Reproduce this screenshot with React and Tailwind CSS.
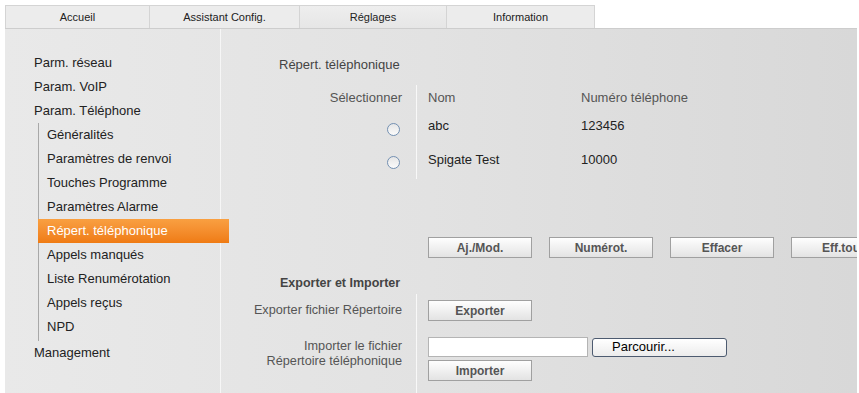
import React from "react";

const tabs = [
  { label: "Accueil", w: "w-[145px]" },
  { label: "Assistant Config.", w: "w-[150px]" },
  { label: "Réglages", w: "w-[147px]", active: true },
  { label: "Information", w: "w-[148px]" },
];

const subItems = [
  "Généralités",
  "Paramètres de renvoi",
  "Touches Programme",
  "Paramètres Alarme",
  "Répert. téléphonique",
  "Appels manqués",
  "Liste Renumérotation",
  "Appels reçus",
  "NPD",
];

function Btn({ children }) {
  return (
    <div className="w-[104px] h-[21px] shrink-0 flex items-center justify-center border border-[#a0a0a0] bg-gradient-to-b from-[#fefefe] to-[#e3e3e3] text-[12px] font-bold text-[#555]">
      {children}
    </div>
  );
}

function Radio() {
  return (
    <div className="w-[13px] h-[13px] rounded-full border border-[#7390b2] bg-gradient-to-b from-[#e6e6e6] to-[#fbfbfb]" />
  );
}

export default function App() {
  return (
    <div className="w-[859px] h-[393px] bg-white overflow-hidden font-['Liberation_Sans',Arial,sans-serif] text-[13px] text-[#222]">
      <div className="pl-[5px] pt-[5px] pr-[2px] h-full flex flex-col">
        <div className="flex h-[23px] shrink-0">
          {tabs.map((t) => (
            <div
              key={t.label}
              className={`${t.w} h-full flex items-center justify-center text-[11px] text-[#222] border-t border-r border-[#d4d4d4] first:border-l ${
                t.active ? "bg-gradient-to-b from-[#eeeeee] to-[#e6e6e6]" : "bg-[#ececec]"
              }`}
            >
              {t.label}
            </div>
          ))}
        </div>
        <div className="flex flex-1 min-h-0 bg-gradient-to-r from-[#e9e9e9] via-[#e2e2e2] to-[#d8d8d8] border-t border-[#cdcdcd]">
          {/* Sidebar */}
          <div className="w-[216px] shrink-0 border-r border-[#f6f6f6] pt-[22px] relative z-10">
            {["Parm. réseau", "Param. VoIP", "Param. Téléphone"].map((s) => (
              <div key={s} className="h-[24px] flex items-center pl-[29px]">
                {s}
              </div>
            ))}
            <div className="ml-[33px] border-l border-[#a8a8a8] pb-[2px]">
              {subItems.map((s) =>
                s === "Répert. téléphonique" ? (
                  <div
                    key={s}
                    className="-ml-px w-[191px] h-[24px] flex items-center pl-[9px] text-white bg-gradient-to-b from-[#f9a041] to-[#ef7b12]"
                  >
                    {s}
                  </div>
                ) : (
                  <div key={s} className="h-[24px] flex items-center pl-[8px]">
                    {s}
                  </div>
                )
              )}
            </div>
            <div className="h-[24px] flex items-center pl-[29px]">Management</div>
          </div>

          {/* Main */}
          <div className="flex-1 min-w-0 overflow-hidden flex flex-col">
            <div className="h-[24px] mt-[24px] flex items-center pl-[58px] text-[#444]">
              Répert. téléphonique
            </div>

            <div className="flex mt-[8px]">
              <div className="w-[195px] shrink-0 flex flex-col">
                <div className="h-[26px] flex items-center justify-end pr-[14px] text-[#555]">
                  Sélectionner
                </div>
                <div className="h-[30px] flex items-center justify-end pr-[16px] pt-[6px]">
                  <Radio />
                </div>
                <div className="h-[38px] flex items-center justify-end pr-[16px] pt-[4px]">
                  <Radio />
                </div>
              </div>
              <div className="border-l border-[#f8f8f8] pl-[11px] flex flex-col">
                <div className="h-[26px] flex items-center text-[#555]">
                  <div className="w-[153px]">Nom</div>
                  <div>Numéro téléphone</div>
                </div>
                <div className="h-[30px] flex items-center">
                  <div className="w-[153px]">abc</div>
                  <div>123456</div>
                </div>
                <div className="h-[38px] flex items-center">
                  <div className="w-[153px]">Spigate Test</div>
                  <div>10000</div>
                </div>
              </div>
            </div>

            <div className="flex gap-[17px] mt-[58px] pl-[207px]">
              <Btn>Aj./Mod.</Btn>
              <Btn>Numérot.</Btn>
              <Btn>Effacer</Btn>
              <Btn>Eff.tout</Btn>
            </div>

            <div className="h-[22px] mt-[14px] flex items-center pl-[59px] font-bold text-[#444] text-[12.5px]">
              Exporter et Importer
            </div>

            <div className="flex flex-1">
              <div className="w-[195px] shrink-0 flex flex-col text-[#555] text-right pr-[14px] text-[12.7px]">
                <div className="h-[30px] pt-[8px] leading-[16px]">Exporter fichier Répertoire</div>
                <div className="pt-[15px] leading-[15px]">
                  Importer le fichier
                  <br />
                  Répertoire téléphonique
                </div>
              </div>
              <div className="border-l border-[#f8f8f8] pl-[11px] flex flex-col">
                <div className="h-[30px] pt-[6px]">
                  <Btn>Exporter</Btn>
                </div>
                <div className="mt-[13px] flex items-center gap-[4px]">
                  <div className="w-[160px] h-[20px] bg-white border border-[#b4b4b4]" />
                  <div className="w-[135px] h-[19px] rounded-[3px] border border-[#4d5b70] bg-gradient-to-b from-[#ffffff] to-[#ececec] text-black flex items-center pl-[19px] text-[13px]">
                    Parcourir...
                  </div>
                </div>
                <div className="mt-[3px]">
                  <Btn>Importer</Btn>
                </div>
              </div>
            </div>
          </div>
        </div>
      </div>
    </div>
  );
}
